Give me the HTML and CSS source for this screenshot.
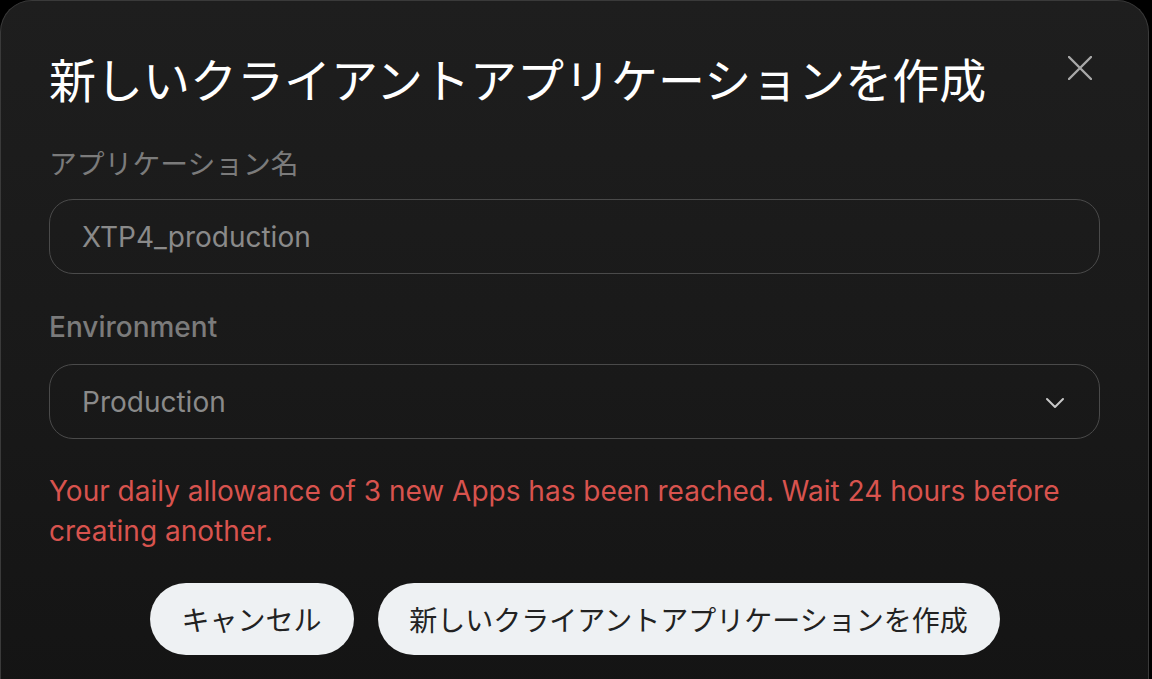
FILE: index.html
```html
<!DOCTYPE html>
<html lang="ja">
<head>
<meta charset="utf-8">
<title>新しいクライアントアプリケーションを作成</title>
<link rel="stylesheet" href="styles.css">
</head>
<body>
<div class="modal">
  <div class="header">
    <h1 class="title">新しいクライアントアプリケーションを作成</h1>
    <button class="close" aria-label="close">
      <svg width="24" height="24" viewBox="0 0 24 24"><path d="M1 1L23 23M23 1L1 23" stroke="#a8a8a8" stroke-width="2.4" stroke-linecap="round" fill="none"/></svg>
    </button>
  </div>
  <div class="form">
    <div class="field">
      <label class="label">アプリケーション名</label>
      <div class="control">XTP4_production</div>
    </div>
    <div class="field">
      <label class="label">Environment</label>
      <div class="control select">
        <span>Production</span>
        <svg class="chev" width="20" height="12" viewBox="0 0 20 12"><path d="M2 2L10 10L18 2" stroke="#c8c8c8" stroke-width="2" fill="none" stroke-linecap="round" stroke-linejoin="round"/></svg>
      </div>
    </div>
    <p class="error">Your daily allowance of 3 new Apps has been reached. Wait 24 hours before creating another.</p>
  </div>
  <div class="actions">
    <button class="btn cancel">キャンセル</button>
    <button class="btn create">新しいクライアントアプリケーションを作成</button>
  </div>
</div>
</body>
</html>
```
FILE: styles.css
```css
html, body {
  margin: 0;
  padding: 0;
  background: #000;
  height: 100%;
  overflow: hidden;
}
body {
  font-family: Inter, "Noto Sans CJK JP", sans-serif;
}
.modal {
  box-sizing: border-box;
  width: 1149px;
  height: 760px;
  border: 1px solid #3a3a3a;
  border-bottom: none;
  border-radius: 32px 32px 0 0;
  background: linear-gradient(180deg, #1e1e1e 0%, #191919 50%, #131313 100%);
  padding: 49px 48px 0 48px;
}
.header {
  display: flex;
  justify-content: space-between;
  align-items: flex-start;
}
.title {
  margin: 0;
  font-family: "Noto Sans CJK JP", sans-serif;
  font-weight: 400;
  font-size: 47px;
  line-height: 56px;
  color: #fff;
  letter-spacing: 0;
}
.close {
  background: none;
  border: none;
  padding: 0;
  margin: 6px 8px 0 0;
  width: 24px;
  height: 24px;
  display: flex;
}
.form {
  display: flex;
  flex-direction: column;
  gap: 35px;
  margin-top: 38px;
}
.field {
  display: flex;
  flex-direction: column;
  gap: 19px;
}
.label {
  font-size: 28px;
  line-height: 36px;
  color: #7b7b7b;
  font-weight: 500;
}
.field:first-child .label {
  font-family: "Noto Sans CJK JP", sans-serif;
  font-size: 27.8px;
  font-weight: 400;
}
.control {
  box-sizing: border-box;
  height: 75px;
  border: 1.5px solid #4a4a4a;
  border-radius: 24px;
  padding: 0 32px;
  display: flex;
  align-items: center;
  font-size: 28px;
  color: #8a8a8a;
}
.select {
  justify-content: space-between;
  padding-right: 34px;
}
.chev {
  margin-top: 2px;
}
.error {
  margin: -3px 0 0 0;
  font-size: 28px;
  line-height: 40px;
  color: #d8534e;
  max-width: 1030px;
}
.actions {
  display: flex;
  justify-content: center;
  gap: 24px;
  margin-top: 32px;
}
.btn {
  height: 72px;
  border: none;
  border-radius: 36px;
  background: #eef1f3;
  color: #222;
  font-family: "Noto Sans CJK JP", sans-serif;
  font-size: 28px;
  padding: 0 20px;
}
.cancel {
  width: 204px;
}
.create {
  width: 622px;
}
```
